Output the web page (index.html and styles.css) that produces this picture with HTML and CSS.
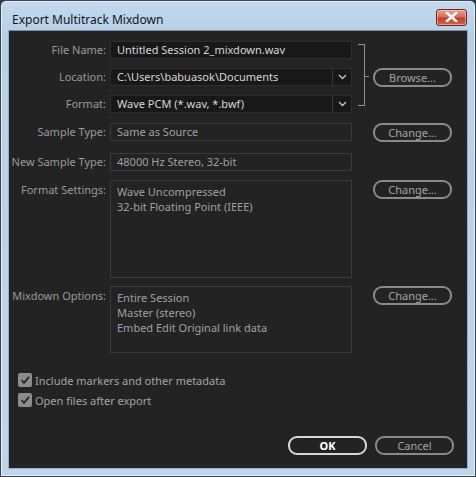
FILE: index.html
```html
<!DOCTYPE html>
<html>
<head>
<meta charset="utf-8">
<link rel="stylesheet" href="styles.css">
</head>
<body>
<div class="window">
  <div class="titlebar">
    <span class="title">Export Multitrack Mixdown</span>
    <div class="close"><svg width="13" height="10" viewBox="0 0 13 10"><path d="M2 1 L11 9 M11 1 L2 9" stroke="#fff" stroke-width="2.6" stroke-linecap="square"/></svg></div>
  </div>
  <div class="content">
    <div class="grid">
      <div class="label r1">File Name:</div>
      <div class="field edit r1">Untitled Session 2_mixdown.wav</div>
      <div class="bracket"><span class="tick"></span></div>

      <div class="label r2">Location:</div>
      <div class="field edit select r2"><span>C:\Users\babuasok\Documents</span><span class="arrow"><svg width="9" height="6" viewBox="0 0 9 6"><path d="M1 1 L4.5 4.5 L8 1" fill="none" stroke="#c8c8c8" stroke-width="1.3"/></svg></span></div>
      <div class="btn r2 browse">Browse...</div>

      <div class="label r3">Format:</div>
      <div class="field edit select r3"><span>Wave PCM (*.wav, *.bwf)</span><span class="arrow"><svg width="9" height="6" viewBox="0 0 9 6"><path d="M1 1 L4.5 4.5 L8 1" fill="none" stroke="#c8c8c8" stroke-width="1.3"/></svg></span></div>
    </div>

    <div class="row st">
      <div class="label">Sample Type:</div>
      <div class="field ro">Same as Source</div>
      <div class="btn">Change...</div>
    </div>
    <div class="row nst">
      <div class="label">New Sample Type:</div>
      <div class="field ro">48000 Hz Stereo, 32-bit</div>
    </div>
    <div class="row fs">
      <div class="label">Format Settings:</div>
      <div class="field ro big">Wave Uncompressed<br>32-bit Floating Point (IEEE)</div>
      <div class="btn">Change...</div>
    </div>
    <div class="row mo">
      <div class="label">Mixdown Options:</div>
      <div class="field ro mid">Entire Session<br>Master (stereo)<br>Embed Edit Original link data</div>
      <div class="btn">Change...</div>
    </div>

    <div class="checks">
      <div class="check"><span class="box"><svg width="12" height="12" viewBox="0 0 12 12"><path d="M2.5 6 L5 8.8 L10 2.8" fill="none" stroke="#262626" stroke-width="1.8"/></svg></span>Include markers and other metadata</div>
      <div class="check"><span class="box"><svg width="12" height="12" viewBox="0 0 12 12"><path d="M2.5 6 L5 8.8 L10 2.8" fill="none" stroke="#262626" stroke-width="1.8"/></svg></span>Open files after export</div>
    </div>

    <div class="footer">
      <div class="btn ok">OK</div>
      <div class="btn">Cancel</div>
    </div>
  </div>
</div>
</body>
</html>
```
FILE: styles.css
```css
* { box-sizing: border-box; }
html, body { margin: 0; padding: 0; }
body {
  width: 476px;
  height: 477px;
  background: #2c3a44;
  font-family: "Noto Sans", "Open Sans", sans-serif;
  font-size: 11px;
  overflow: hidden;
}
.window {
  width: 476px;
  height: 477px;
  border: 1px solid #3a4550;
  border-radius: 6px 6px 0 0;
  background: linear-gradient(#c5d9ee 0, #b8cfe8 30px, #bfd5ec 100%);
  padding: 0 7px 7px 7px;
  display: flex;
  flex-direction: column;
  box-shadow: inset 0 0 0 1px #e4eef8;
}
.titlebar {
  height: 29px;
  display: flex;
  align-items: center;
  justify-content: space-between;
  padding: 0 0 0 4px;
}
.title {
  color: #101820;
  font-family: "Noto Sans", sans-serif;
  font-size: 12px;
  margin-top: 7px;
}
.close {
  width: 31px;
  height: 17px;
  margin-top: 3px;
  margin-right: 1px;
  border: 1px solid #6b2a22;
  border-radius: 3px;
  background: linear-gradient(#e8a092 0, #d76d5a 45%, #c0402b 55%, #d0654c 100%);
  display: flex;
  align-items: center;
  justify-content: center;
  box-shadow: inset 0 0 0 1px rgba(255,220,210,0.5);
}
.content {
  flex: 1;
  background: #232323;
  border: 1px solid #9aaec4;
  border-top-color: #7c8ea3;
  padding: 10px 0 0 0;
  color: #a8a8a8;
}
.grid {
  display: grid;
  grid-template-columns: 101px 242px 6px 15px 79px;
  grid-template-rows: 18px 18px 18px;
  row-gap: 9px;
  column-gap: 0;
}
.label {
  text-align: right;
  padding-right: 4px;
  color: #9a9a9a;
  line-height: 18px;
  white-space: nowrap;
}
.r1 { grid-row: 1; }
.r2 { grid-row: 2; }
.r3 { grid-row: 3; }
.grid .label { grid-column: 1; }
.grid .field { grid-column: 2; }
.field {
  height: 18px;
  line-height: 16px;
  border: 1px solid #3c3c3c;
  padding: 0 6px;
  white-space: nowrap;
  overflow: hidden;
}
.edit {
  background: #181818;
  border-color: #2e2e2e;
  color: #d6d6d6;
}
.select {
  display: flex;
  justify-content: space-between;
  padding-right: 0;
}
.arrow {
  width: 19px;
  border-left: 1px solid #3a3a3a;
  display: flex;
  align-items: center;
  justify-content: center;
}
.bracket {
  grid-column: 3;
  grid-row: 1 / 4;
  margin: 3px 0 7px 6px;
  border: 1px solid #8e8e8e;
  border-left: none;
  width: 7px;
  position: relative;
}
.tick {
  position: absolute;
  right: -5px;
  top: 31px;
  width: 5px;
  border-top: 1px solid #8e8e8e;
}
.btn {
  width: 79px;
  height: 19px;
  border: 2px solid #8a8a8a;
  border-radius: 9px;
  color: #a4a4a4;
  text-align: center;
  line-height: 15px;
  font-size: 11px;
}
.browse { grid-column: 5; }
.row {
  display: grid;
  grid-template-columns: 101px 242px 21px 79px;
  align-items: start;
}
.row .field { grid-column: 2; }
.row .btn { grid-column: 4; }
.ro { color: #a0a0a0; background: #232323; }
.st { margin-top: 10px; }
.nst { margin-top: 11px; }
.fs { margin-top: 9px; }
.mo { margin-top: 8px; }
.big { height: 98px; padding-top: 3px; line-height: 15px; }
.mid { height: 67px; padding-top: 3px; line-height: 15px; }
.row .label { line-height: 18px; }
.fs .label, .mo .label { line-height: 18px; margin-top: 1px; }
.checks { margin-top: 20px; padding-left: 9px; }
.check {
  display: flex;
  align-items: center;
  height: 14px;
  margin-bottom: 6px;
  color: #a4a4a4;
}
.box {
  width: 14px;
  height: 14px;
  background: #8c8c8c;
  border-radius: 2px;
  margin-right: 3px;
  display: flex;
  align-items: center;
  justify-content: center;
}
.footer {
  display: flex;
  justify-content: flex-end;
  gap: 8px;
  margin-top: 29px;
  padding-right: 13px;
}
.ok {
  border-color: #d8d8d8;
  color: #ffffff;
  font-weight: bold;
}
```
